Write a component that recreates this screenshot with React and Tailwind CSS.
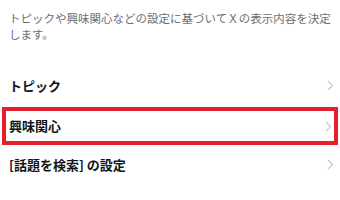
import React from 'react';

const Chevron = () => (
  <svg width="7" height="11" viewBox="0 0 7 11" fill="none" className="shrink-0">
    <path d="M1 1l4.5 4.5L1 10" stroke="#c4c7cc" strokeWidth="1.2" />
  </svg>
);

const Row = ({ label, highlight }) => (
  <div
    className={
      highlight
        ? 'mx-[2px] h-[38px] flex items-center justify-between border-4 border-[#e3202b] pl-[3px] pr-[2px]'
        : 'h-[39px] flex items-center justify-between pl-[9px] pr-[6px]'
    }
  >
    <span className="text-[13px] font-bold text-[#0f1419]">{label}</span>
    <Chevron />
  </div>
);

const App = () => {
  return (
    <div
      className="w-[340px] h-[200px] bg-white overflow-hidden"
      style={{ fontFamily: '"Noto Sans CJK JP", "Noto Sans", sans-serif' }}
    >
      <p className="px-[9px] pt-[10px] text-[11.5px] leading-[16px] text-[#6b6f73] tracking-[0px]">
        トピックや興味関心などの設定に基づいてＸの表示内容を決定します。
      </p>
      <div className="mt-[24px] flex flex-col">
        <Row label="トピック" />
        <div className="h-[2px]" />
        <Row label="興味関心" highlight />
        <Row label="[話題を検索] の設定" />
      </div>
    </div>
  );
};

export default App;
